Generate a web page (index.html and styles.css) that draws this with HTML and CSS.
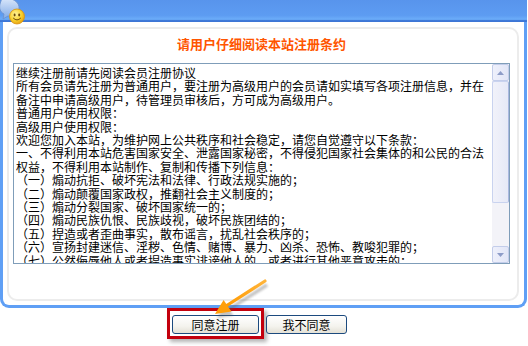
FILE: index.html
```html
<!DOCTYPE html>
<html lang="zh-CN">
<head>
    <meta charset="UTF-8">
    <meta name="viewport" content="width=device-width, initial-scale=1.0">
    <title>会员注册</title>
    <link rel="stylesheet" href="styles.css">
</head>
<body>
    <div class="window">
        <div class="titlebar">
            <svg class="app-icon" width="28" height="26" viewBox="0 0 28 26">
                <defs>
                    <linearGradient id="glass" x1="0" y1="0" x2="0" y2="1">
                        <stop offset="0" stop-color="#dbe8fb"/>
                        <stop offset="1" stop-color="#7fa9e6"/>
                    </linearGradient>
                    <radialGradient id="face" cx="0.4" cy="0.35" r="0.7">
                        <stop offset="0" stop-color="#fff6a0"/>
                        <stop offset="0.6" stop-color="#f7cf2a"/>
                        <stop offset="1" stop-color="#e59b0c"/>
                    </radialGradient>
                </defs>
                <path d="M2 -2 C12 -3 20 2 19 9 C18 14 13 17 8 16 L3 19 L4 14 C0 12 -1 8 0 4 Z" fill="url(#glass)" stroke="#6b90cc" stroke-width="0.8"/>
                <circle cx="17" cy="16.5" r="7.5" fill="url(#face)" stroke="#d8900c" stroke-width="0.8"/>
                <ellipse cx="14.6" cy="15" rx="1" ry="1.4" fill="#6b4a08"/>
                <ellipse cx="19.2" cy="15" rx="1" ry="1.4" fill="#6b4a08"/>
                <path d="M13.2 18 Q17 21.8 20.8 18" fill="none" stroke="#6b4a08" stroke-width="1"/>
            </svg>
        </div>
        <div class="frame">
            <div class="panel">
                <h2 class="title">请用户仔细阅读本站注册条约</h2>
                <div class="terms">
                    <div class="terms-text">继续注册前请先阅读会员注册协议
所有会员请先注册为普通用户，要注册为高级用户的会员请如实填写各项注册信息，并在
备注中申请高级用户，待管理员审核后，方可成为高级用户。
普通用户使用权限：
高级用户使用权限：
欢迎您加入本站，为维护网上公共秩序和社会稳定，请您自觉遵守以下条款：
一、不得利用本站危害国家安全、泄露国家秘密，不得侵犯国家社会集体的和公民的合法
权益，不得利用本站制作、复制和传播下列信息：
（一）煽动抗拒、破坏宪法和法律、行政法规实施的；
（二）煽动颠覆国家政权，推翻社会主义制度的；
（三）煽动分裂国家、破坏国家统一的；
（四）煽动民族仇恨、民族歧视，破坏民族团结的；
（五）捏造或者歪曲事实，散布谣言，扰乱社会秩序的；
（六）宣扬封建迷信、淫秽、色情、赌博、暴力、凶杀、恐怖、教唆犯罪的；
（七）公然侮辱他人或者捏造事实诽谤他人的，或者进行其他恶意攻击的；
（八）损害国家机关信誉的；
（九）其他违反宪法和法律行政法规的；</div>
                    <div class="scrollbar">
                        <div class="sb-btn">
                            <svg width="7" height="4" viewBox="0 0 7 4"><path d="M0 4 L3.5 0 L7 4 Z" fill="#8d9cc8"/></svg>
                        </div>
                        <div class="sb-thumb"></div>
                        <div class="sb-track"></div>
                        <div class="sb-btn">
                            <svg width="7" height="4" viewBox="0 0 7 4"><path d="M0 0 L3.5 4 L7 0 Z" fill="#8d9cc8"/></svg>
                        </div>
                    </div>
                </div>
            </div>
        </div>
    </div>

    <div class="actions">
        <div class="highlight">
            <button class="btn btn-agree">同意注册</button>
        </div>
        <button class="btn btn-refuse">我不同意</button>
    </div>

    <!-- orange pointer laid over the buttons -->
    <svg class="pointer" width="528" height="346" viewBox="0 0 528 346">
        <defs>
            <linearGradient id="orange" x1="1" y1="0" x2="0" y2="1">
                <stop offset="0" stop-color="#ffb43a"/>
                <stop offset="1" stop-color="#ff9a00"/>
            </linearGradient>
            <filter id="soft"><feGaussianBlur stdDeviation="1.2"/></filter>
        </defs>
        <g opacity="0.35" filter="url(#soft)" transform="translate(2,4)">
            <line x1="265" y1="281" x2="226" y2="306" stroke="#555" stroke-width="3.5"/>
            <polygon points="215,314 223.6,299.9 231.4,311.5" fill="#555"/>
        </g>
        <line x1="265" y1="281" x2="226" y2="306" stroke="url(#orange)" stroke-width="3.2" stroke-linecap="round"/>
        <polygon points="215,314 223.6,299.9 231.4,311.5" fill="#ff9f0a"/>
    </svg>
</body>
</html>
```

FILE: styles.css
```css
body {
    margin: 0;
    background-color: #fff;
    font-family: "Noto Sans CJK SC", "Liberation Sans", sans-serif;
    font-size: 12px;
    color: #000;
    position: relative;
    width: 528px;
    height: 346px;
    overflow: hidden;
}
.window {
    width: 527px;
}
.titlebar {
    position: relative;
    height: 22px;
    background: linear-gradient(#5894ec, #5d9cf2 70%, #6cadf9 88%, #3f7ad9 92%, #3c74d4);
}
.app-icon {
    position: absolute;
    left: 0;
    top: 0;
}
.frame {
    height: 286px;
    box-sizing: border-box;
    border: 3px solid #5f9ff5;
    border-top: none;
    border-radius: 0 0 9px 9px;
    padding: 5px 5px 4px 4px;
    background-color: #fff;
}
.panel {
    height: 100%;
    box-sizing: border-box;
    border: 2px solid #ececec;
    border-radius: 10px;
    padding: 7px 7px 0 4px;
}
.title {
    margin: 0 0 11px;
    height: 16px;
    line-height: 16px;
    font-size: 13px;
    font-weight: bold;
    color: #ff5500;
    text-align: center;
}
.terms {
    display: flex;
    height: 201px;
    box-sizing: border-box;
    border: 1px solid #7f9db9;
    background-color: #fff;
}
.terms-text {
    flex: 1;
    overflow: hidden;
    padding: 2px 0 0 2px;
    white-space: pre-line;
    line-height: 13.4px;
}
.scrollbar {
    width: 17px;
    display: flex;
    flex-direction: column;
    background-color: #f3f3f8;
}
.sb-btn {
    height: 17px;
    box-sizing: border-box;
    display: flex;
    align-items: center;
    justify-content: center;
    border: 1px solid #c3cdea;
    border-radius: 2px;
    background: linear-gradient(90deg, #eef0fb, #e2e6f7);
}
.sb-thumb {
    height: 122px;
    box-sizing: border-box;
    border: 1px solid #c9d3ef;
    border-right-color: #a9b8e0;
    border-radius: 2px;
    background: linear-gradient(90deg, #f1f2fa, #e6e9f7);
}
.sb-track {
    flex: 1;
}
.actions {
    display: flex;
    align-items: flex-start;
    gap: 2px;
    padding-left: 167px;
}
.highlight {
    width: 97px;
    height: 31px;
    box-sizing: border-box;
    border: 3px solid #c3000d;
    padding: 4px 0 0 2px;
    box-shadow: 3px 3px 4px rgba(0, 0, 0, 0.3);
    background-color: #fff;
}
.btn {
    height: 19px;
    box-sizing: border-box;
    border: 1px solid #1c4a7e;
    border-radius: 3px;
    background: linear-gradient(#ffffff, #f4f3ee 60%, #e4e1d6);
    font-family: "Noto Sans CJK SC", "Liberation Sans", sans-serif;
    font-size: 12px;
    line-height: 17px;
    color: #000;
    padding: 0;
    cursor: pointer;
}
.btn-agree {
    width: 87px;
}
.btn-refuse {
    width: 81px;
    margin-top: 7px;
}
.pointer {
    position: absolute;
    left: 0;
    top: 0;
    pointer-events: none;
}
```
